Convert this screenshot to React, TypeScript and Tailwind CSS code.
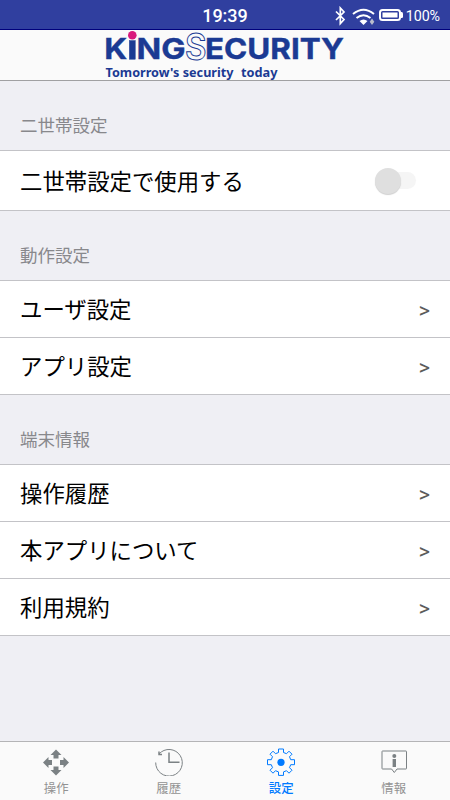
import { useState, type ReactNode } from 'react'

type TabKey = 'control' | 'history' | 'settings' | 'info'

const sections = [
  { title: '動作設定', rows: ['ユーザ設定', 'アプリ設定'] },
  { title: '端末情報', rows: ['操作履歴', '本アプリについて', '利用規約'] },
]

function StatusBar() {
  return (
    <div className="relative flex h-[29px] shrink-0 items-center justify-end bg-[#303f9f] pr-[10px] text-white shadow-[0_1px_0_#00007c]">
      <span className="absolute inset-x-0 top-[5px] text-center text-[18px] leading-[21px] font-medium">19:39</span>
      <svg width="72" height="20" viewBox="0 0 72 20" className="mt-[2px] shrink-0" fill="none" aria-hidden="true">
        <path d="M3 5.500l8 8-3.700 4V2l3.700 4-8 8" stroke="white" strokeWidth="1.700" />
        <path d="M20 8q10.500-8.500 21 0M23.500 12q7-5.500 14 0" stroke="white" strokeWidth="2" />
        <path d="M26.500 15q4-3 8 0l-4 4z" fill="white" />
        <path d="M39 12.500l2.300 3.200-2.300 3.300-2.300-3.300z" fill="#b9bdcc" />
        <rect x="47" y="4" width="20" height="10" rx="2.500" stroke="white" strokeWidth="2" />
        <rect x="49.500" y="6.500" width="15" height="5" fill="white" />
        <path d="M67.500 6h1.200q1.300 0 1.300 1.500v3q0 1.500-1.300 1.500h-1.200z" fill="white" />
      </svg>
      <span className="mt-[2px] w-[35px] text-right text-[14.300px] leading-[18px] tracking-[-0.1px] whitespace-nowrap">
        100%
      </span>
    </div>
  )
}

function Logo() {
  return (
    <svg width="240" height="50" viewBox="105 30 240 50" role="img" aria-label="KiNGSECURITY" className="font-['Inter',sans-serif]">
      <g fill="#1b3a93" stroke="#1b3a93" strokeWidth="0.400" fontSize="28.500" fontWeight="700">
        <text x="104.300" y="59.300" textLength="23" lengthAdjust="spacingAndGlyphs">K</text>
        <rect x="129.300" y="40.500" width="6" height="18.800" />
        <text x="136.500" y="59.300" textLength="49" lengthAdjust="spacingAndGlyphs">NG</text>
        <text x="205" y="59.300" textLength="139" lengthAdjust="spacingAndGlyphs">ECURITY</text>
      </g>
      <text
        x="185"
        y="60"
        fontSize="37"
        fontWeight="600"
        fill="#fafafa"
        stroke="#1b3a93"
        strokeWidth="1"
        textLength="21.500"
        lengthAdjust="spacingAndGlyphs"
      >
        S
      </text>
      <circle cx="132.300" cy="35.300" r="4.300" fill="#d91a7d" />
      <g fill="#1b3a93" className="font-['Noto_Sans',sans-serif]" fontSize="13" fontWeight="700">
        <text x="105.500" y="76.500" textLength="128" lengthAdjust="spacingAndGlyphs">Tomorrow's security</text>
        <text x="241" y="76.500" textLength="36.500" lengthAdjust="spacingAndGlyphs">today</text>
      </g>
    </svg>
  )
}

function SectionHeader({ title }: { title: string }) {
  return (
    <h2 className="flex h-[70px] items-end border-b border-[#c3c3c7] px-5 pb-[11px] text-[17.500px] leading-[26px] text-[#88888c]">
      {title}
    </h2>
  )
}

function LinkRow({ label }: { label: string }) {
  return (
    <button className="flex h-[57px] w-full cursor-pointer items-center justify-between border-b border-[#c3c3c7] bg-white pr-5 pb-px pl-5 text-left text-[22.400px]">
      <span className="pt-1">{label}</span>
      <span className="pt-[3px] text-[22px] text-[#5b5b5b]">&gt;</span>
    </button>
  )
}

function Toggle({ checked, onChange }: { checked: boolean; onChange: (value: boolean) => void }) {
  return (
    <button
      role="switch"
      aria-checked={checked}
      aria-label="二世帯設定で使用する"
      onClick={() => onChange(!checked)}
      className="mr-[14px] flex h-[17px] w-[40px] cursor-pointer items-center rounded-full bg-[#f5f5f5]"
    >
      <span
        className={`h-[26px] w-[26px] shrink-0 rounded-full shadow-[0_1px_1px_#cfcfcf] ${
          checked ? 'translate-x-[15px] bg-[#007aff]' : '-translate-x-px bg-[#dfdfdf]'
        }`}
      />
    </button>
  )
}

const tabs: { key: TabKey; label: string; icon: ReactNode }[] = [
  {
    key: 'control',
    label: '操作',
    icon: (
      <path
        fill="currentColor"
        d="M14 1.500l5.500 5.500h-3V10.500h-5V7h-3zM14 27.500l-5.500-5.500h3V18.500h5v3.500h3zM1 14.500l5.500-5.500v3H10v5H6.500v3zM27 14.500l-5.500 5.500v-3H18v-5h3.500v-3z"
      />
    ),
  },
  {
    key: 'history',
    label: '履歴',
    icon: (
      <g fill="none" stroke="currentColor">
        <path d="M.700 14.500A13.300 13.300 0 1 0 4 6" />
        <path d="M4 3.500v3h3" strokeWidth="1.500" />
        <path d="M14 4.500v9.800H24.500" strokeWidth="1.500" />
      </g>
    ),
  },
  {
    key: 'settings',
    label: '設定',
    icon: (
      <>
        <path
          fill="none"
          stroke="currentColor"
          d="M11.500 1h5v3.500l3 1.200L22 3.200 25 6.200l-2.500 2.500 1.200 3H27.500v5h-3.800l-1.200 3L25 22.200l-3 3-2.500-2.500-3 1.200v3.500h-5v-3.500l-3-1.200L6 25.200l-3-3 2.500-2.500-1.200-3H.500v-5h3.800l1.200-3L3 6.200l3-3 2.500 2.500 3-1.200z"
        />
        <circle cx="14" cy="14.300" r="3.600" fill="currentColor" />
      </>
    ),
  },
  {
    key: 'info',
    label: '情報',
    icon: (
      <>
        <path
          d="M2.500 3h23.500q.500 0 .500.500v17q0 .500-.500.500H17l-2.700 3.500-2.700-3.500H2.500q-.500 0-.500-.500v-17q0-.500.500-.500z"
          fill="none"
          stroke="currentColor"
        />
        <circle cx="14.300" cy="8" r="2" fill="currentColor" />
        <path d="M12.600 11h3.400v8h-3.400z" fill="currentColor" />
      </>
    ),
  },
]

export default function App() {
  const [twoHousehold, setTwoHousehold] = useState(false)
  const [activeTab, setActiveTab] = useState<TabKey>('settings')

  return (
    <div className="flex h-[800px] w-[450px] flex-col overflow-hidden bg-[#efeff4] font-['Roboto','Noto_Sans_CJK_JP',sans-serif] text-black">
      <StatusBar />
      <header className="flex h-[52px] shrink-0 justify-center border-b border-[#a0a0a2] bg-[#fafafa] pt-px">
        <Logo />
      </header>

      <main className="flex-1">
        <section>
          <SectionHeader title="二世帯設定" />
          <div className="flex h-[60px] items-center justify-between border-b border-[#c3c3c7] bg-white px-5 text-[22.400px]">
            <span className="pt-1">二世帯設定で使用する</span>
            <Toggle checked={twoHousehold} onChange={setTwoHousehold} />
          </div>
        </section>
        {sections.map((section) => (
          <section key={section.title}>
            <SectionHeader title={section.title} />
            {section.rows.map((row) => (
              <LinkRow key={row} label={row} />
            ))}
          </section>
        ))}
      </main>

      <nav className="grid h-[59px] shrink-0 grid-cols-4 border-t border-[#b4b4b6] bg-[#fafafa]">
        {tabs.map((tab) => (
          <button
            key={tab.key}
            onClick={() => setActiveTab(tab.key)}
            className={`flex cursor-pointer flex-col items-center pt-[6px] text-[12.400px] leading-[18px] ${
              activeTab === tab.key ? 'font-medium text-[#007aff]' : 'text-[#929292]'
            }`}
          >
            <svg
              width="28"
              height="28"
              viewBox="0 0 28 28"
              className={activeTab === tab.key ? 'text-[#007aff]' : 'text-[#7b8184]'}
              aria-hidden="true"
            >
              {tab.icon}
            </svg>
            <span className="mt-1">{tab.label}</span>
          </button>
        ))}
      </nav>
    </div>
  )
}
